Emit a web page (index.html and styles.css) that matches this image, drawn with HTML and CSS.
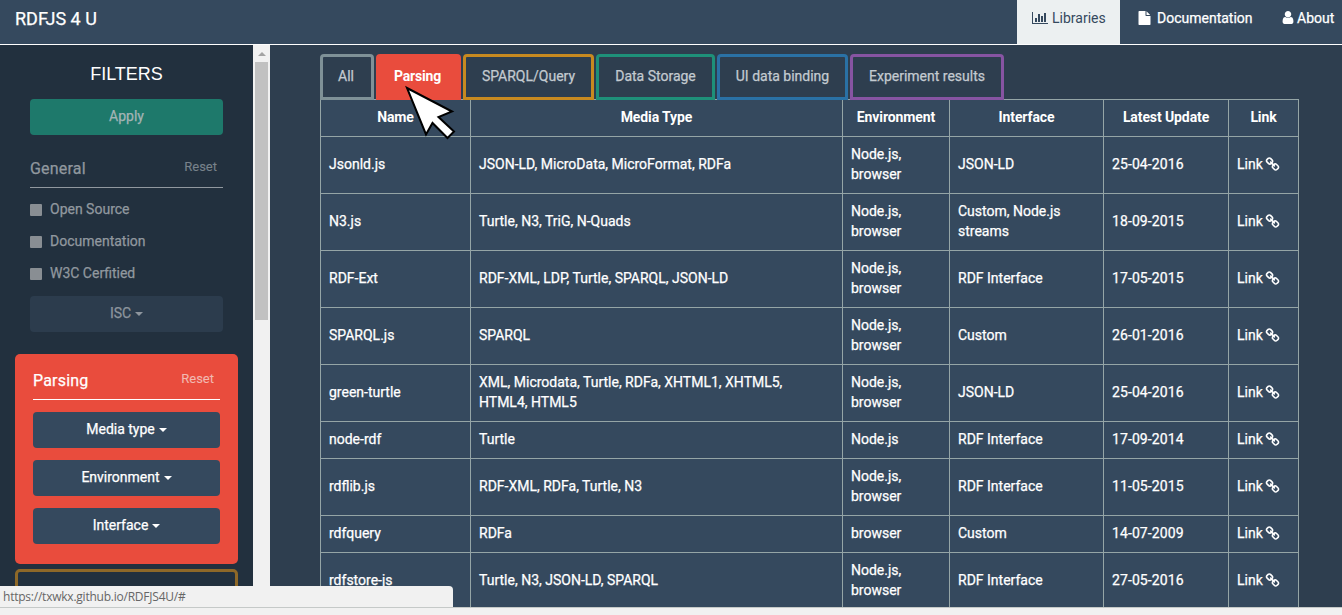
FILE: index.html
```html
<!DOCTYPE html>
<html lang="en">
<head>
<meta charset="utf-8">
<title>RDFJS 4 U</title>
<link rel="stylesheet" href="styles.css">
</head>
<body>
<svg class="defs" width="0" height="0">
  <symbol id="chain" viewBox="0 0 1792 1792"><path d="M1520 1216q0-40-28-68l-208-208q-28-28-68-28-42 0-72 32 3 3 19 18.500t21.500 21.500 15 19 13 25.500 3.500 27.500q0 40-28 68t-68 28q-15 0-27.500-3.500t-25.500-13-19-15-21.500-21.500-18.500-19q-33 31-33 73 0 40 28 68l206 207q27 27 68 27 40 0 68-26l147-146q28-28 28-67zm-703-705q0-40-28-68l-206-207q-28-28-68-28-39 0-68 27l-147 146q-28 28-28 67 0 40 28 68l208 208q27 27 68 27 42 0 72-31-3-3-19-18.500t-21.500-21.500-15-19-13-25.500-3.500-27.500q0-40 28-68t68-28q15 0 27.500 3.500t25.500 13 19 15 21.500 21.500 18.500 19q33-31 33-73zm895 705q0 120-85 203l-147 146q-83 83-203 83-121 0-204-85l-206-207q-83-83-83-203 0-123 88-209l-88-88q-86 88-208 88-120 0-204-84l-208-208q-84-84-84-204t85-203l147-146q83-83 203-83 121 0 204 85l206 207q83 83 83 203 0 123-88 209l88 88q86-88 208-88 120 0 204 84l208 208q84 84 84 204z"/></symbol>
</svg>
<header class="navbar">
  <a class="brand">RDFJS 4 U</a>
  <nav class="nav">
    <a class="nav-item active"><svg class="ico-chart" viewBox="0 0 2048 1792"><path d="M640 896v512h-256v-512h256zm384-512v1024h-256v-1024h256zm1024 1152v128h-2048v-1536h128v1408h1920zm-640-896v768h-256v-768h256zm384-384v1152h-256v-1152h256z"/></svg><span>Libraries</span></a>
    <a class="nav-item docs"><svg class="ico-file" viewBox="128 0 1536 1792"><path d="M1152 512v-472q22 14 36 28l408 408q14 14 28 36h-472zm-128 32q0 40 28 68t68 28h544v1056q0 40-28 68t-68 28h-1344q-40 0-68-28t-28-68v-1600q0-40 28-68t68-28h800v544z"/></svg><span>Documentation</span></a>
    <a class="nav-item about"><svg class="ico-user" viewBox="256 128 1280 1536"><path d="M1536 1399q0 109-62.500 187t-150.500 78h-854q-88 0-150.500-78t-62.500-187q0-85 8.500-160.500t31.500-152 58.500-131 94-89 134.500-34.500q131 128 313 128t313-128q76 0 134.500 34.500t94 89 58.500 131 31.500 152 8.500 160.500zm-256-887q0 159-112.500 271.500t-271.500 112.500-271.500-112.500-112.500-271.500 112.500-271.500 271.500-112.500 271.500 112.500 112.500 271.500z"/></svg><span>About</span></a>
  </nav>
</header>
<div class="body">
  <aside class="sidebar">
    <h1 class="title">FILTERS</h1>
    <button class="btn apply">Apply</button>
    <section class="general">
      <div class="head"><span class="head-title">General</span><span class="reset">Reset</span></div>
      <label class="check"><i class="box"></i>Open Source</label>
      <label class="check"><i class="box"></i>Documentation</label>
      <label class="check"><i class="box"></i>W3C Cerfitied</label>
      <button class="btn isc">ISC<i class="caret"></i></button>
    </section>
    <section class="panel">
      <div class="head"><span class="head-title">Parsing</span><span class="reset">Reset</span></div>
      <button class="btn">Media type<i class="caret"></i></button>
      <button class="btn">Environment<i class="caret"></i></button>
      <button class="btn">Interface<i class="caret"></i></button>
    </section>
    <section class="panel-next"></section>
  </aside>
  <div class="scrollbar"><i class="arrow"></i><i class="thumb"></i></div>
  <main class="main">
    <div class="tabs">
      <a class="tab all">All</a><a class="tab parsing">Parsing</a><a class="tab sparql">SPARQL/Query</a><a class="tab storage">Data Storage</a><a class="tab ui">UI data binding</a><a class="tab exp">Experiment results</a>
    </div>
    <table class="table">
      <colgroup><col class="c1"><col class="c2"><col class="c3"><col class="c4"><col class="c5"><col class="c6"></colgroup>
      <tr><th>Name</th><th>Media Type</th><th>Environment</th><th>Interface</th><th>Latest Update</th><th>Link</th></tr>
      <tr><td>Jsonld.js</td><td>JSON-LD, MicroData, MicroFormat, RDFa</td><td>Node.js,<br>browser</td><td>JSON-LD</td><td class="date">25-04-2016</td><td>Link <svg class="chain"><use href="#chain"/></svg></td></tr>
      <tr><td>N3.js</td><td>Turtle, N3, TriG, N-Quads</td><td>Node.js,<br>browser</td><td>Custom, Node.js<br>streams</td><td class="date">18-09-2015</td><td>Link <svg class="chain"><use href="#chain"/></svg></td></tr>
      <tr><td>RDF-Ext</td><td>RDF-XML, LDP, Turtle, SPARQL, JSON-LD</td><td>Node.js,<br>browser</td><td>RDF Interface</td><td class="date">17-05-2015</td><td>Link <svg class="chain"><use href="#chain"/></svg></td></tr>
      <tr><td>SPARQL.js</td><td>SPARQL</td><td>Node.js,<br>browser</td><td>Custom</td><td class="date">26-01-2016</td><td>Link <svg class="chain"><use href="#chain"/></svg></td></tr>
      <tr><td>green-turtle</td><td>XML, Microdata, Turtle, RDFa, XHTML1, XHTML5,<br>HTML4, HTML5</td><td>Node.js,<br>browser</td><td>JSON-LD</td><td class="date">25-04-2016</td><td>Link <svg class="chain"><use href="#chain"/></svg></td></tr>
      <tr><td>node-rdf</td><td>Turtle</td><td>Node.js</td><td>RDF Interface</td><td class="date">17-09-2014</td><td>Link <svg class="chain"><use href="#chain"/></svg></td></tr>
      <tr><td>rdflib.js</td><td>RDF-XML, RDFa, Turtle, N3</td><td>Node.js,<br>browser</td><td>RDF Interface</td><td class="date">11-05-2015</td><td>Link <svg class="chain"><use href="#chain"/></svg></td></tr>
      <tr><td>rdfquery</td><td>RDFa</td><td>browser</td><td>Custom</td><td class="date">14-07-2009</td><td>Link <svg class="chain"><use href="#chain"/></svg></td></tr>
      <tr><td>rdfstore-js</td><td>Turtle, N3, JSON-LD, SPARQL</td><td>Node.js,<br>browser</td><td>RDF Interface</td><td class="date">27-05-2016</td><td>Link <svg class="chain"><use href="#chain"/></svg></td></tr>
    </table>
  </main>
</div>
<footer class="bottom"></footer>
<div class="status">https://txwkx.github.io/RDFJS4U/#</div>
<svg class="cursor" viewBox="0 0 56 56"><path d="M3 3L48 26.500 34.500 32 50 46.500 43.500 53 28.500 38 22 49.500Z"/></svg>
</body>
</html>
```

FILE: styles.css
```css
* { box-sizing: border-box; }
body {
  margin: 0;
  width: 1342px;
  height: 615px;
  overflow: hidden;
  display: flex;
  flex-direction: column;
  position: relative;
  background: #2e3e4f;
  color: #fff;
  font: 14px/20px Roboto, "Liberation Sans", sans-serif;
  -webkit-text-stroke: 0.25px currentColor;
}
.defs { position: absolute; }
svg { fill: currentColor; }
.navbar {
  flex: none;
  height: 45px;
  display: flex;
  justify-content: space-between;
  background: #35495e;
  border-bottom: 1px solid #fff;
}
.brand { padding: 9px 15px; font-size: 18px; }
.nav { display: flex; }
.nav-item { display: flex; padding-top: 8px; white-space: nowrap; }
.active { width: 103px; padding-left: 15px; background: #ecf0f1; color: #35495e; -webkit-text-stroke-width: 0; }
.docs { width: 145px; padding-left: 18px; }
.about { width: 77px; padding-left: 17px; }
.ico-chart { width: 16px; height: 14px; margin: 3px 4px 0 0; }
.ico-file { width: 13px; height: 14px; margin: 3px 6px 0 0; }
.ico-user { width: 12px; height: 13px; margin: 3px 3px 0 0; }

.body { height: 562px; flex: none; display: flex; overflow: hidden; }
.sidebar {
  width: 253px;
  flex: none;
  padding: 0 15px;
  background: #22303e;
  display: flex;
  flex-direction: column;
}
.title {
  margin: 18px 0 14px;
  font: 400 18px/22px "Liberation Sans", Arial, sans-serif;
  text-align: center;
  -webkit-text-stroke-width: 0;
}
.btn {
  display: flex;
  justify-content: center;
  align-items: center;
  flex: none;
  width: 100%;
  height: 36px;
  padding: 0 0 2px;
  border: 0;
  border-radius: 4px;
  background: #35495e;
  color: #fff;
  font: inherit;
}
.btn.apply { width: 193px; margin-left: 15px; background: #1e796b; color: #a3b4b5; }
.caret { margin: 2px 0 0 4px; border: 4px solid transparent; border-top-color: currentColor; border-bottom: 0; }
.general { margin-top: 22px; padding: 0 15px; color: #91989f; }
.head { height: 31px; display: flex; justify-content: space-between; border-bottom: 1px solid currentColor; }
.head-title { padding-top: 1px; font-size: 16px; line-height: 22px; letter-spacing: 0.2px; }
.reset { padding-right: 6px; font-size: 13px; line-height: 20px; color: #78828b; -webkit-text-stroke-width: 0.1px; }
.check { display: flex; align-items: center; height: 32px; gap: 8px; }
.head + .check { margin-top: 5px; }
.box { width: 12px; height: 12px; margin-top: 2px; border-radius: 1px; background: #898e93; }
.btn.isc { margin-top: 7px; background: #2c3c4d; color: #8e969e; }
.panel { flex: none; margin-top: 22px; height: 210px; padding: 15px 18px; border-radius: 5px; background: #e94c3d; }
.panel .head { margin-bottom: 12px; }
.panel .reset { color: #f2b9b1; }
.panel .btn + .btn { margin-top: 12px; }
.panel-next { flex: none; height: 100px; margin-top: 5px; border: 3px solid #8e6828; border-radius: 5px; }
.scrollbar { width: 17px; flex: none; background: #f1f1f1; display: flex; flex-direction: column; align-items: center; }
.arrow { margin: 7px 0 6px; border: 4px solid transparent; border-bottom-color: #a3a3a3; border-top: 0; }
.thumb { width: 13px; height: 258px; background: #c1c1c1; }

.main { padding: 9px 0 0 50px; }
.tabs { display: flex; gap: 2px; height: 45px; }
.tab {
  position: relative;
  height: 46px;
  flex: none;
  border: 3px solid;
  border-radius: 4px 4px 0 0;
  padding-top: 9px;
  text-align: center;
  background: #2e3e4f;
  color: #c3cad0;
  white-space: nowrap;
}
.tab.all { width: 54px; padding-right: 2px; border-color: #7f9197; }
.tab.parsing {
  width: 85px;
  padding-right: 2px;
  border-color: #e94c3d;
  background: #e94c3d;
  color: #fff;
  font-weight: 700;
  letter-spacing: -0.2px;
  -webkit-text-stroke-width: 0;
}
.tab.sparql { width: 131px; border-color: #c88a20; }
.tab.storage { width: 119px; border-color: #1e9079; }
.tab.ui { width: 131px; border-color: #2a71a5; }
.tab.exp { width: 154px; border-color: #8754a2; }

.table { width: 979px; table-layout: fixed; border-collapse: collapse; background: #35495e; }
.c1 { width: 150px; }
.c2 { width: 372px; }
.c3 { width: 107px; }
.c4 { width: 154px; }
.c5 { width: 125px; }
.c6 { width: 70px; }
th, td { padding: 7px 8px 9px; border: 1px solid #95a5a6; text-align: left; white-space: nowrap; }
th { text-align: center; font-weight: 700; letter-spacing: -0.1px; -webkit-text-stroke-width: 0; }
.date { letter-spacing: 0.1px; }
.chain { width: 15px; height: 15px; margin-left: -1px; vertical-align: -3px; }

.bottom { height: 8px; flex: none; background: #f1f1f1; border-top: 1px solid #c5c9c8; }
.status {
  position: absolute;
  left: 0;
  top: 586px;
  width: 453px;
  height: 21px;
  padding-left: 3px;
  border-radius: 0 4px 0 0;
  background: #f1f1f1;
  color: #666;
  font: 12px/22px "Open Sans", "Noto Sans", sans-serif;
  letter-spacing: -0.23px;
  -webkit-text-stroke-width: 0;
}
.cursor {
  position: absolute;
  left: 404px;
  top: 85px;
  width: 56px;
  height: 56px;
  fill: #fff;
  stroke: #000;
  stroke-width: 2;
}
```
